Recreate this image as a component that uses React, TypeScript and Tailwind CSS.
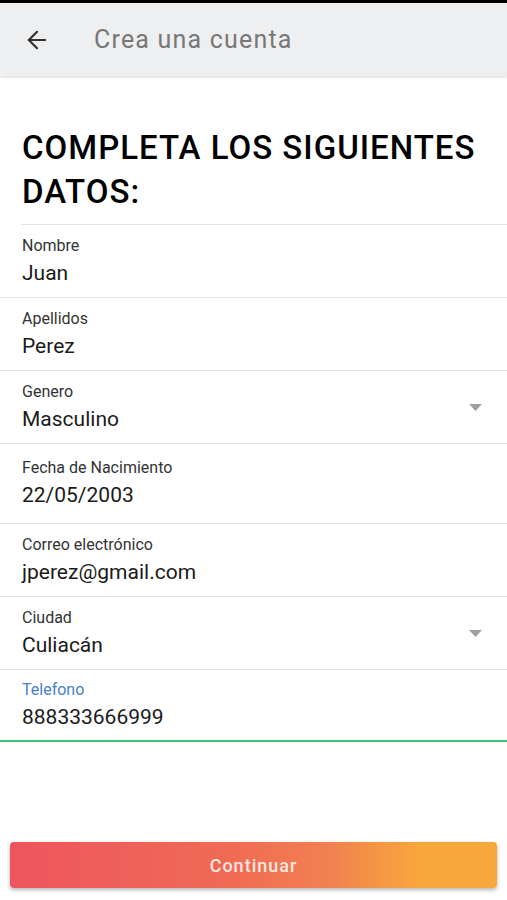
import { ArrowLeft } from 'lucide-react';

// Campos del formulario
interface Field {
  label: string;
  value: string;
  select?: boolean;
  tall?: boolean;
}

const fields: Field[] = [
  { label: 'Nombre', value: 'Juan' },
  { label: 'Apellidos', value: 'Perez' },
  { label: 'Genero', value: 'Masculino', select: true },
  { label: 'Fecha de Nacimiento', value: '22/05/2003', tall: true },
  { label: 'Correo electrónico', value: 'jperez@gmail.com' },
  { label: 'Ciudad', value: 'Culiacán', select: true },
];

function Caret() {
  return (
    <svg width="13" height="7" viewBox="0 0 13 7" className="mr-[25px]">
      <polygon points="0,0 13,0 6.5,7" fill="#9e9e9e" />
    </svg>
  );
}

export default function App() {
  return (
    <main className="w-[507px] h-[900px] bg-white font-['Roboto',sans-serif] flex flex-col overflow-hidden">
      {/* barra superior */}
      <div className="h-[3px] bg-black" />
      <header className="h-[73px] bg-[#eeeff0] flex items-center shadow-[0_1px_3px_rgba(0,0,0,0.18)] relative z-10">
        <ArrowLeft className="ml-[23px] w-[28px] h-[28px] text-[#333]" strokeWidth={1.9} />
        <h1 className="ml-[43px] text-[25px] tracking-[1.2px] text-[#777]">Crea una cuenta</h1>
      </header>

      <h2 className="mt-[50px] px-[22px] text-[33px] leading-[44px] font-medium tracking-[1px] text-black uppercase">
        Completa los siguientes datos:
      </h2>

      <div className="mt-[10px] ml-[21px] border-t border-[#e2e2e2]" />

      {fields.map((f) => (
        <div
          key={f.label}
          className={`flex items-center border-b border-[#e2e2e2] ${f.tall ? 'h-[80px]' : 'h-[73px]'}`}
        >
          <div className="flex-1 pl-[22px]">
            <div className="text-[16px] leading-[18px] text-[#333]">{f.label}</div>
            <div className="mt-[5px] text-[21px] leading-[26px] text-[#1a1a1a]">{f.value}</div>
          </div>
          {f.select && <Caret />}
        </div>
      ))}

      <div className="h-[72px] flex flex-col justify-center border-b-2 border-[#3cc47c]">
        <div className="pl-[22px]">
          <div className="text-[16px] leading-[18px] text-[#4a7fcb]">Telefono</div>
          <div className="mt-[5px] text-[21px] leading-[26px] text-[#1a1a1a]">888333666999</div>
        </div>
      </div>

      <div className="flex-1" />

      <div className="px-[10px] pb-[12px]">
        <button className="w-full h-[46px] rounded-[4px] bg-[linear-gradient(90deg,#ef555f_0%,#f06a55_45%,#f28050_65%,#f8a83a_85%,#f8a83a_100%)] shadow-[0_2px_4px_rgba(0,0,0,0.3)] text-[18px] font-medium tracking-[1px] text-[#fde8e0]">
          Continuar
        </button>
      </div>
    </main>
  );
}
